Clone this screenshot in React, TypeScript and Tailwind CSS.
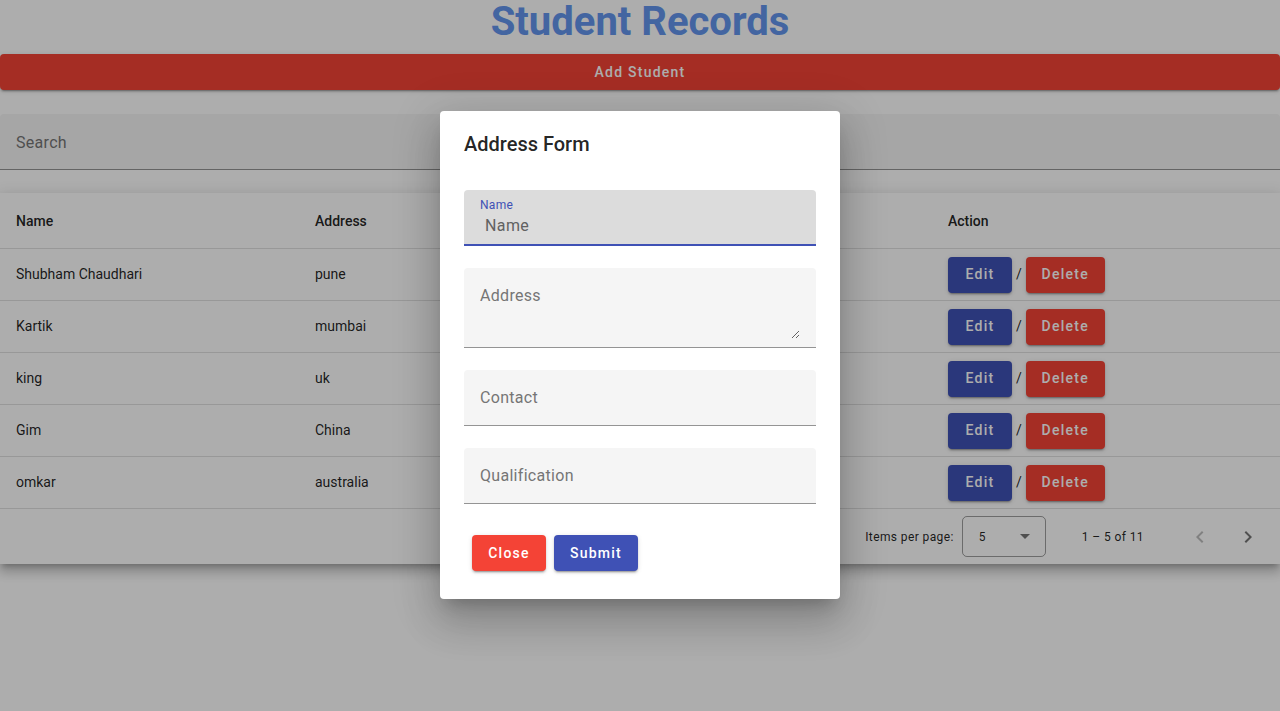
import React from "react";

const students = [
  { name: "Shubham Chaudhari", address: "pune", contact: "9876543210", qual: "BE" },
  { name: "Kartik", address: "mumbai", contact: "9123456780", qual: "BSc" },
  { name: "king", address: "uk", contact: "9988776655", qual: "MBA" },
  { name: "Gim", address: "China", contact: "9090909090", qual: "BCom" },
  { name: "omkar", address: "australia", contact: "9812345678", qual: "ME" },
];

const raised =
  "shadow-[0_3px_1px_-2px_rgba(0,0,0,0.2),0_2px_2px_0_rgba(0,0,0,0.14),0_1px_5px_0_rgba(0,0,0,0.12)]";

function Field({ label, height }: { label: string; height: string }) {
  return (
    <div className={`w-full ${height} bg-[#f5f5f5] rounded-t-[4px] border-b border-[#949494] flex items-center px-4`}>
      <span className="text-[16px] text-[#757575] tracking-[0.3px]">{label}</span>
    </div>
  );
}

export default function App() {
  return (
    <div
      className="relative w-[1280px] h-[711px] bg-white overflow-hidden"
      style={{ fontFamily: "Roboto, 'Helvetica Neue', Arial, sans-serif" }}
    >
      {/* Page */}
      <div className="flex flex-col">
        <h1 className="m-0 h-[44px] text-center text-[40px] leading-[44px] font-bold text-[#6495ed]">
          Student Records
        </h1>
        <button
          className={`mt-[10px] h-[36px] w-full rounded-[4px] bg-[#f44336] text-white text-[14px] font-medium tracking-[1.25px] ${raised}`}
        >
          Add Student
        </button>

        <div className="mt-[24px] h-[56px] w-full bg-[#f5f5f5] rounded-t-[4px] border-b border-[#949494] flex items-center px-4 pt-[2px]">
          <span className="text-[16px] text-[#757575] tracking-[0.3px]">Search</span>
        </div>

        <div className="mt-[23px] bg-white shadow-[0_5px_5px_-3px_rgba(0,0,0,0.2),0_8px_10px_1px_rgba(0,0,0,0.14),0_3px_14px_2px_rgba(0,0,0,0.12)] text-[14px] text-[rgba(0,0,0,0.87)]">
          <div className="grid grid-cols-[315px_211px_211px_211px_1fr] h-[56px] items-center border-b border-[#e0e0e0] font-medium pt-[1px]">
            <div className="pl-4">Name</div>
            <div>Address</div>
            <div>Contact</div>
            <div>Qualification</div>
            <div>Action</div>
          </div>
          {students.map((s) => (
            <div
              key={s.name}
              className="grid grid-cols-[315px_211px_211px_211px_1fr] h-[52px] items-center border-b border-[#e0e0e0]"
            >
              <div className="pl-4">{s.name}</div>
              <div>{s.address}</div>
              <div>{s.contact}</div>
              <div>{s.qual}</div>
              <div className="flex items-center">
                <button className={`h-[36px] w-[64px] rounded-[4px] bg-[#3f51b5] text-white font-medium tracking-[1.25px] ${raised}`}>
                  Edit
                </button>
                <span className="mx-[4px]">/</span>
                <button className={`h-[36px] w-[79px] rounded-[4px] bg-[#f44336] text-white font-medium tracking-[1.25px] ${raised}`}>
                  Delete
                </button>
              </div>
            </div>
          ))}
          <div className="h-[55px] flex items-center justify-end text-[12px] tracking-[0.4px] text-[rgba(0,0,0,0.87)]">
            <span className="mr-[8px]">Items per page:</span>
            <div className="w-[84px] h-[41px] border border-[rgba(0,0,0,0.38)] rounded-[5px] flex items-center pl-[16px] pr-[15px] justify-between">
              <span className="text-[12px]">5</span>
              <svg width="10" height="5" viewBox="0 0 10 5">
                <path d="M0 0 L5 5 L10 0 Z" fill="rgba(0,0,0,0.54)" />
              </svg>
            </div>
            <span className="ml-[36px] mr-[36px]">1 – 5 of 11</span>
            <div className="w-[40px] h-[40px] flex items-center justify-center">
              <svg width="24" height="24" viewBox="0 0 24 24">
                <path d="M15.41 7.41L14 6l-6 6 6 6 1.41-1.41L10.83 12z" fill="rgba(0,0,0,0.26)" />
              </svg>
            </div>
            <div className="ml-[8px] mr-[12px] w-[40px] h-[40px] flex items-center justify-center">
              <svg width="24" height="24" viewBox="0 0 24 24">
                <path d="M10 6L8.59 7.41 13.17 12l-4.58 4.59L10 18l6-6z" fill="rgba(0,0,0,0.54)" />
              </svg>
            </div>
          </div>
        </div>
      </div>

      {/* Backdrop */}
      <div className="absolute inset-0 bg-[rgba(0,0,0,0.32)]" />

      {/* Dialog */}
      <div className="absolute inset-0 flex items-center justify-center">
        <div className="mb-[1px] w-[400px] h-[488px] bg-white rounded-[4px] px-[24px] pt-[23px] shadow-[0_11px_15px_-7px_rgba(0,0,0,0.2),0_24px_38px_3px_rgba(0,0,0,0.14),0_9px_46px_8px_rgba(0,0,0,0.12)] flex flex-col">
          <h2 className="m-0 text-[20px] leading-[20px] font-medium text-[rgba(0,0,0,0.87)]">Address Form</h2>

          <div className="mt-[36px] w-full h-[56px] bg-[#dcdcdc] rounded-t-[4px] border-b-2 border-[#3f51b5] flex flex-col px-4 pt-[8px]">
            <span className="text-[12px] leading-[14px] text-[#3f51b5] tracking-[0.3px]">Name</span>
            <span className="mt-[4px] pl-[5px] text-[16px] leading-[20px] text-[#616161] tracking-[0.4px]">Name</span>
          </div>

          <div className="mt-[22px] w-full h-[80px] bg-[#f5f5f5] rounded-t-[4px] border-b border-[#949494] flex px-4 pr-[16px] pt-[17px] pb-[8px]">
            <textarea
              placeholder="Address"
              className="w-full h-full bg-transparent outline-none text-[16px] leading-[22px] tracking-[0.3px] placeholder:text-[#757575] resize-y p-0"
              style={{ fontFamily: "Roboto, Arial, sans-serif" }}
            />
          </div>

          <div className="mt-[22px]">
            <Field label="Contact" height="h-[56px]" />
          </div>
          <div className="mt-[22px]">
            <Field label="Qualification" height="h-[56px]" />
          </div>

          <div className="mt-[31px] flex gap-[8px] pl-[8px]">
            <button className={`h-[36px] w-[74px] rounded-[4px] bg-[#f44336] text-white text-[14px] font-medium tracking-[1.25px] ${raised}`}>
              Close
            </button>
            <button className={`h-[36px] w-[84px] rounded-[4px] bg-[#3f51b5] text-white text-[14px] font-medium tracking-[1.25px] ${raised}`}>
              Submit
            </button>
          </div>
        </div>
      </div>
    </div>
  );
}
